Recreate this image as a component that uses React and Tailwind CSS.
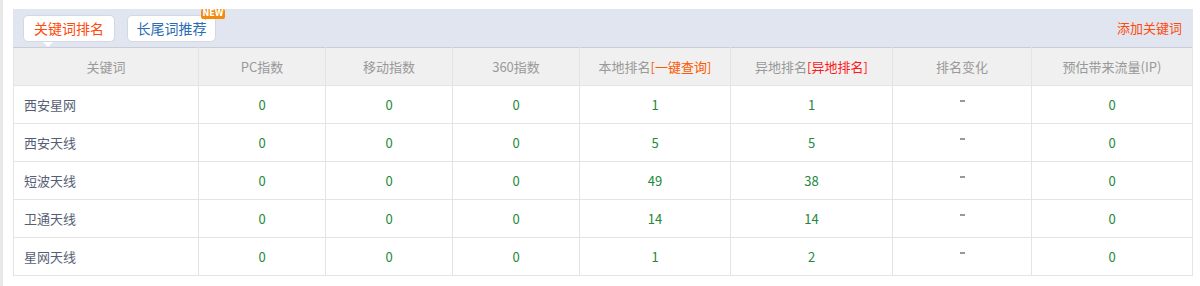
import React from "react";

const rows = [
  ["西安星网", "0", "0", "0", "1", "1", "-", "0"],
  ["西安天线", "0", "0", "0", "5", "5", "-", "0"],
  ["短波天线", "0", "0", "0", "49", "38", "-", "0"],
  ["卫通天线", "0", "0", "0", "14", "14", "-", "0"],
  ["星网天线", "0", "0", "0", "1", "2", "-", "0"],
];

const widths = [185, 127, 127, 127, 151, 162, 139, 161];

export default function App() {
  return (
    <div
      className="flex w-[1200px] h-[286px] bg-white text-[13px]"
      style={{ fontFamily: '"Noto Sans CJK SC", "Noto Sans", sans-serif' }}
    >
      <div className="w-[3px] shrink-0 bg-[#e8e8e8]" />
      <div className="ml-[10px] mt-[9px] w-[1180px]">
        <div className="flex h-[38px] items-start justify-between bg-[#e1e5ef] pl-[10px] pr-[11px]">
          <div className="flex gap-[12px] pt-[6px]">
            <div className="relative flex h-[27px] w-[92px] items-center justify-center rounded-[5px] border border-[#d3d8e4] bg-white text-[14px] text-[#ff4a0a]">
              关键词排名
              <span className="absolute left-[19px] top-[26px] h-0 w-0 border-x-[5px] border-t-[5px] border-x-transparent border-t-white" />
            </div>
            <div className="relative flex h-[27px] w-[89px] items-center justify-center rounded-[5px] border border-[#d3d8e4] bg-white text-[14px] text-[#2a6db5]">
              长尾词推荐
              <span className="absolute -right-[10px] -top-[7px] flex h-[10px] w-[24px] items-center justify-center rounded-[2px] bg-[#f28a0c] text-[8px] font-bold leading-none text-white" style={{ fontFamily: '"DejaVu Sans", sans-serif' }}>
                NEW
              </span>
              <span className="absolute right-[9px] top-[1px] h-0 w-0 border-l-[4px] border-t-[3px] border-l-transparent border-t-[#f28a0c]" />
            </div>
          </div>
          <div className="pt-[9px] text-[13px] text-[#ff4a0a]">添加关键词</div>
        </div>
        <table className="w-[1179px] table-fixed border-collapse">
          <colgroup>
            {widths.map((w, i) => (
              <col key={i} style={{ width: w }} />
            ))}
          </colgroup>
          <thead>
            <tr className="h-[38px] bg-[#f0f0f0] text-[#999999]">
              <th className="border border-[#e4e4e4] border-t-[#c9cdd8] font-normal">关键词</th>
              <th className="border border-[#e4e4e4] border-t-[#c9cdd8] font-normal">PC指数</th>
              <th className="border border-[#e4e4e4] border-t-[#c9cdd8] font-normal">移动指数</th>
              <th className="border border-[#e4e4e4] border-t-[#c9cdd8] font-normal">360指数</th>
              <th className="border border-[#e4e4e4] border-t-[#c9cdd8] font-normal">
                本地排名<span className="text-[#ff5a00]">[一键查询]</span>
              </th>
              <th className="border border-[#e4e4e4] border-t-[#c9cdd8] font-normal">
                异地排名<span className="text-[#ff1a1a]">[异地排名]</span>
              </th>
              <th className="border border-[#e4e4e4] border-t-[#c9cdd8] font-normal">排名变化</th>
              <th className="border border-[#e4e4e4] border-t-[#c9cdd8] font-normal">预估带来流量(IP)</th>
            </tr>
          </thead>
          <tbody>
            {rows.map((r, ri) => (
              <tr key={ri} className="h-[38px]">
                {r.map((c, ci) =>
                  ci === 0 ? (
                    <td key={ci} className="border border-[#e4e4e4] pl-[10px] text-[#555e75]">
                      {c}
                    </td>
                  ) : ci === 6 ? (
                    <td key={ci} className="border border-[#e4e4e4] text-center">
                      <span className="inline-block h-[2px] w-[5px] -translate-y-[5px] bg-[#999999] align-middle" />
                    </td>
                  ) : (
                    <td key={ci} className="border border-[#e4e4e4] text-center text-[#23883c]">
                      {c}
                    </td>
                  )
                )}
              </tr>
            ))}
          </tbody>
        </table>
      </div>
    </div>
  );
}
